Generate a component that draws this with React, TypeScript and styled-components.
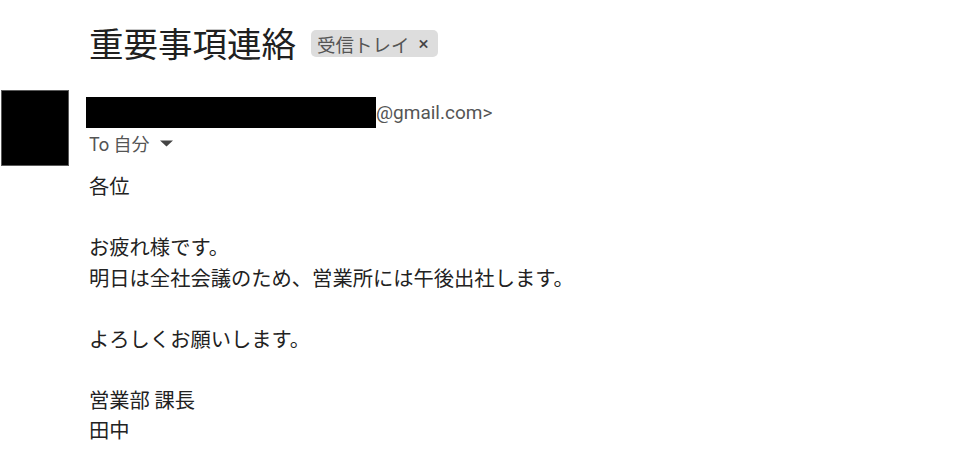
import React from "react";
import styled, { createGlobalStyle } from "styled-components";

const GlobalStyle = createGlobalStyle`
  html, body {
    margin: 0;
    padding: 0;
    background: #ffffff;
  }
  body {
    font-family: "Noto Sans CJK JP", "Noto Sans", sans-serif;
    color: #222222;
  }
`;

const bodyLines = [
    "各位",
    "",
    "お疲れ様です。",
    "明日は全社会議のため、営業所には午後出社します。",
    "",
    "よろしくお願いします。",
    "",
    "営業部 課長",
    "田中",
];

export default function App() {
    return (
        <>
            <GlobalStyle/>
            <Page>
                <SubjectRow>
                    <Subject>重要事項連絡</Subject>
                    <Label>
                        受信トレイ
                        <LabelClose>×</LabelClose>
                    </Label>
                </SubjectRow>
                <Message>
                    <Avatar/>
                    <MessageContent>
                        <Sender>
                            <Redacted/>
                            <SenderAddress>@gmail.com&gt;</SenderAddress>
                        </Sender>
                        <Recipients>
                            To 自分
                            <svg width="13" height="8" viewBox="0 0 13 8">
                                <path d="M0 1.5 L13 1.5 L6.5 7.5 Z" fill="#444"/>
                            </svg>
                        </Recipients>
                        <MessageBody>
                            {bodyLines.map((line, i) => (
                                <BodyLine key={i}>{line || "\u00a0"}</BodyLine>
                            ))}
                        </MessageBody>
                    </MessageContent>
                </Message>
            </Page>
        </>
    );
}

const Page = styled.div`
  width: 967px;
  height: 456px;
  overflow: hidden;
  padding-top: 19px;
  box-sizing: border-box;
`;

const SubjectRow = styled.div`
  display: flex;
  align-items: center;
  gap: 15px;
  margin-left: 89px;
  height: 46px;
`;

const Subject = styled.h1`
  margin: 0;
  font-size: 34.5px;
  font-weight: 400;
  line-height: 46px;
  color: #202020;
`;

const Label = styled.span`
  display: inline-flex;
  align-items: center;
  gap: 9px;
  height: 27px;
  padding: 0 9px 0 6px;
  border-radius: 5px;
  background: #dddddd;
  color: #555555;
  font-size: 18.5px;
  margin-top: 3px;
`;

const LabelClose = styled.span`
  font-family: "Roboto", "Liberation Sans", sans-serif;
  font-size: 19px;
  color: #444444;
`;

const Message = styled.div`
  display: flex;
  gap: 20px;
  margin-top: 25px;
  padding-left: 1px;
`;

const Avatar = styled.div`
  flex: none;
  width: 68px;
  height: 76px;
  background: #000000;
  box-shadow: inset 0 0 0 1px #5a5a5a;
`;

const MessageContent = styled.div`
  display: flex;
  flex-direction: column;
`;

const Sender = styled.div`
  display: flex;
  align-items: center;
  height: 32px;
  margin-top: 6px;
`;

const Redacted = styled.span`
  display: inline-block;
  width: 290px;
  height: 31px;
  margin-left: -3px;
  background: #000000;
`;

const SenderAddress = styled.span`
  font-family: "Roboto", "Liberation Sans", sans-serif;
  font-size: 19px;
  color: #555555;
`;

const Recipients = styled.div`
  display: flex;
  align-items: center;
  gap: 9px;
  height: 30px;
  font-size: 18px;
  color: #555555;

  svg {
    margin-left: 2px;
  }
`;

const MessageBody = styled.div`
  margin-top: 12px;
`;

const BodyLine = styled.div`
  font-size: 20.3px;
  line-height: 30.5px;
  color: #222222;
  white-space: pre;
`;
